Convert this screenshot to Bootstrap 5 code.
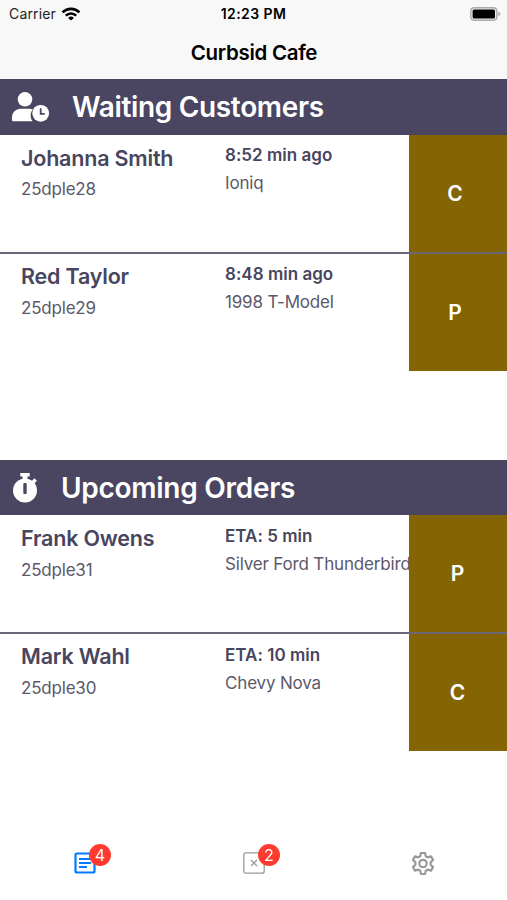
<!DOCTYPE html>
<html lang="en">
<head>
<meta charset="utf-8">
<meta name="viewport" content="width=device-width, initial-scale=1">
<title>Curbsid Cafe</title>
<link href="https://cdn.jsdelivr.net/npm/bootstrap@5.3.0/dist/css/bootstrap.min.css" rel="stylesheet">
<style>
  body { font-family: Inter, "Liberation Sans", sans-serif; color: #48455f; height: 900px; overflow: hidden; }
  .app-head { background: #f8f8f8; height: 79px; color: #000; }
  .status { height: 28px; padding: 0 6px 0 9px; font-size: 14px; line-height: 28px; }
  .status > div { flex: 1 1 0; }
  .carrier { color: #222; letter-spacing: .15px; }
  .clock { letter-spacing: .4px; margin-right: 3px; }
  .app-title { font-size: 20.5px; line-height: 49px; letter-spacing: -.3px; padding-left: 1px; }
  .section-bar { background: #4a4661; height: 56px; padding-left: 12px; }
  .section-bar h2 { font-size: 28px; line-height: 56px; letter-spacing: -.33px; font-weight: 600; }
  .section-bar .title-waiting { margin-left: 21px; }
  .section-bar .title-upcoming { margin-left: 23px; letter-spacing: -.27px; }
  .section-upcoming .section-bar { height: 55px; }
  .orders { height: 325px; }
  .order { height: 117px; }
  .order + .order { border-top: 2px solid #6b6678; height: 119px; }
  .who { width: 225px; padding: 10px 0 0 21px; }
  .what { width: 185px; margin-right: -1px; padding-top: 10px; white-space: nowrap; }
  .order + .order .who { padding-top: 9px; }
  .section-upcoming .what { padding-top: 11px; }
  .name { font-size: 21.5px; line-height: 26px; letter-spacing: -.2px; font-weight: 570; }
  .code { font-size: 17px; line-height: 22px; margin-top: 7px; color: #5b586c; letter-spacing: -.2px; }
  .order + .order .code, .section-upcoming .code { margin-top: 8px; }
  .when { font-size: 17px; line-height: 20px; letter-spacing: .02px; font-weight: 590; }
  .car { font-size: 17px; line-height: 20px; margin-top: 8px; color: #5b586c; letter-spacing: -.17px; }
  .kind { background: #856404; color: #fff; font-size: 21px; width: 98px; padding-right: 6px; font-weight: 570; }
  .kind-late { padding-right: 1px; }
  .tabs { height: 67px; }
  .tabs a { width: 169px; height: 60px; padding: 19px 0 0 1px; }
  .count { position: absolute; left: 15px; top: -8px; width: 22px; height: 22px; border-radius: 50%; background: #ff3b30; color: #fff; font-size: 16px; line-height: 22px; text-align: center; }
</style>
</head>
<body class="bg-white d-flex flex-column">
<header class="app-head">
  <div class="status d-flex align-items-center">
    <div class="d-flex align-items-center"><span class="carrier">Carrier</span>
      <svg class="ms-1" width="22" height="14" viewBox="-2 0 22 14" fill="none" stroke="#000" stroke-width="2.600"><path d="M.6 5.300a11.900 11.900 0 0 1 16.800 0M3.800 8.700a7.400 7.400 0 0 1 10.400 0"/><path d="M9 13.600 6.100 10.900a4.200 4.200 0 0 1 5.800 0z" fill="#000" stroke="none"/></svg>
    </div>
    <span class="clock fw-semibold">12:23 PM</span>
    <div class="d-flex justify-content-end">
      <svg width="31" height="14" viewBox="0 0 31 14"><rect x=".8" y=".8" width="26" height="12.400" rx="3.400" fill="#eee" stroke="#aaa" stroke-width="1.400"/><rect x="2.600" y="2.500" width="22.400" height="9" rx="1.600"/><path d="M28.300 4.700q2.200.8 2.200 2.300t-2.200 2.300z" fill="#aaa"/></svg>
    </div>
  </div>
  <h1 class="app-title fw-semibold text-center m-0">Curbsid Cafe</h1>
</header>

<main class="flex-grow-1">
  <section>
    <div class="section-bar d-flex align-items-center text-white">
      <svg width="39" height="30" viewBox="0 0 39 30" fill="#fff"><circle cx="13" cy="7.300" r="7.300"/><path d="M0 28v-2.500c0-5 3.800-8.800 8.600-8.800h8.800c1.300 0 2.400.2 3.400.6-2.800 3.600-2.800 8.500-.2 12H1.300Q0 29.300 0 28z"/><circle cx="28.700" cy="21.300" r="8.400"/><path d="M28.700 16.300v5.500h4" fill="none" stroke="#4a4661" stroke-width="1.800"/></svg>
      <h2 class="mb-0 title-waiting">Waiting Customers</h2>
    </div>
    <div class="orders">
      <div class="order d-flex">
        <div class="who"><div class="name">Johanna Smith</div><div class="code">25dple28</div></div>
        <div class="what"><div class="when">8:52 min ago</div><div class="car">Ioniq</div></div>
        <div class="kind d-flex align-items-center justify-content-center">C</div>
      </div>
      <div class="order d-flex">
        <div class="who"><div class="name">Red Taylor</div><div class="code">25dple29</div></div>
        <div class="what"><div class="when">8:48 min ago</div><div class="car">1998 T-Model</div></div>
        <div class="kind d-flex align-items-center justify-content-center">P</div>
      </div>
    </div>
  </section>
  <section class="section-upcoming">
    <div class="section-bar d-flex align-items-center text-white">
      <svg width="26" height="30" viewBox="0 0 26 30" fill="#fff"><circle cx="13" cy="17.600" r="12"/><path d="M8.300 0h9.400v3.400h-2.300V8h-4.800V3.400H8.300zM19.500 8.300l3-3 2.400 2.400-3 3z"/><rect x="11.300" y="10" width="3.400" height="11" rx="1" fill="#4a4661"/></svg>
      <h2 class="mb-0 title-upcoming">Upcoming Orders</h2>
    </div>
    <div class="orders">
      <div class="order d-flex">
        <div class="who"><div class="name">Frank Owens</div><div class="code">25dple31</div></div>
        <div class="what"><div class="when">ETA: 5 min</div><div class="car">Silver Ford Thunderbird</div></div>
        <div class="kind kind-late d-flex align-items-center justify-content-center">P</div>
      </div>
      <div class="order d-flex">
        <div class="who"><div class="name">Mark Wahl</div><div class="code">25dple30</div></div>
        <div class="what"><div class="when">ETA: 10 min</div><div class="car">Chevy Nova</div></div>
        <div class="kind kind-late d-flex align-items-center justify-content-center">C</div>
      </div>
    </div>
  </section>
</main>

<nav class="fixed-bottom tabs d-flex">
  <a href="#" class="d-flex justify-content-center text-decoration-none" aria-label="Orders"><span class="position-relative">
    <svg class="d-block" width="22" height="22" viewBox="0 0 22 22" fill="none" stroke="#007aff" stroke-width="2.200"><rect x="1.500" y="1.500" width="19" height="19" rx="1.500"/><path d="M5 7h12M5 11h12M5 15h8"/></svg><span class="count">4</span></span></a>
  <a href="#" class="d-flex justify-content-center text-decoration-none" aria-label="Cancelled"><span class="position-relative">
    <svg class="d-block" width="22" height="22" viewBox="0 0 22 22" fill="none" stroke="#999" stroke-width="1.300"><rect x=".8" y=".8" width="20.400" height="20.400" rx="2"/><path d="M8 8l6 6M14 8l-6 6"/></svg><span class="count">2</span></span></a>
  <a href="#" class="d-flex justify-content-center text-decoration-none" aria-label="Settings">
    <svg width="24" height="24" viewBox="0 0 24 24" fill="none" stroke="#999" stroke-width="2.200" stroke-linejoin="round"><circle cx="12" cy="11.500" r="3.700"/><path d="M10 1h4l.8 3.200 2 1.200 3.200-1 2 3.500L19.600 10.300v2.400L22 15.100l-2 3.500-3.200-1-2 1.200-.8 3.200h-4l-.8-3.200-2-1.200-3.200 1-2-3.500 2.400-2.400v-2.400L2 7.900l2-3.500 3.200 1 2-1.200z"/></svg></a>
</nav>
<script src="https://cdn.jsdelivr.net/npm/bootstrap@5.3.0/dist/js/bootstrap.bundle.min.js"></script>
</body>
</html>
